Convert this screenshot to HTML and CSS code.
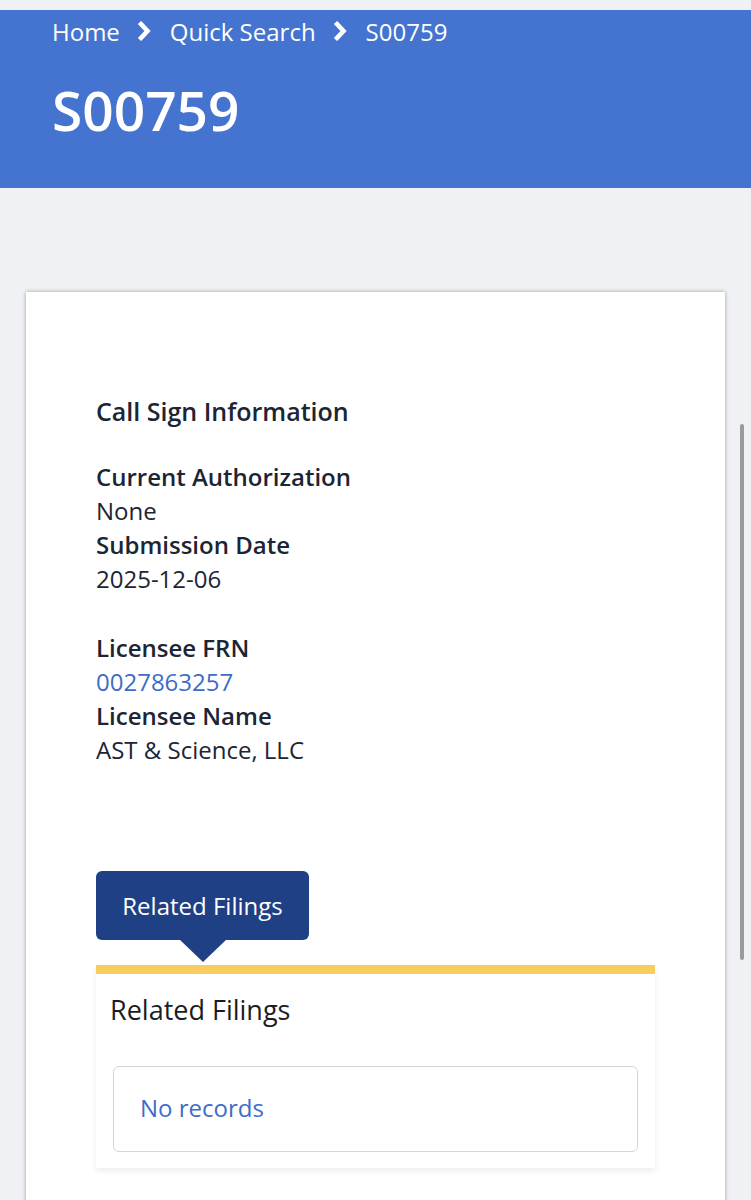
FILE: index.html
```html
<!DOCTYPE html>
<html lang="en">
<head>
    <meta charset="UTF-8">
    <meta name="viewport" content="width=device-width, initial-scale=1.0">
    <title>S00759</title>
    <link rel="stylesheet" href="styles.css">
</head>
<body>
    <header class="page-header">
        <nav class="breadcrumb">
            <a href="#">Home</a>
            <svg class="crumb-sep" viewBox="0 0 14 20" width="14" height="20"><polyline points="2.5,1.5 10.5,10 2.5,18.5" fill="none" stroke="#fff" stroke-width="4.6" stroke-linejoin="miter" stroke-linecap="butt"/></svg>
            <a href="#">Quick Search</a>
            <svg class="crumb-sep" viewBox="0 0 14 20" width="14" height="20"><polyline points="2.5,1.5 10.5,10 2.5,18.5" fill="none" stroke="#fff" stroke-width="4.6" stroke-linejoin="miter" stroke-linecap="butt"/></svg>
            <span>S00759</span>
        </nav>
        <h1 class="page-title">S00759</h1>
    </header>

    <main class="content">
        <section class="card">
            <h2 class="section-title">Call Sign Information</h2>

            <dl class="info-group">
                <dt>Current Authorization</dt>
                <dd>None</dd>
                <dt>Submission Date</dt>
                <dd>2025-12-06</dd>
            </dl>

            <dl class="info-group">
                <dt>Licensee FRN</dt>
                <dd><a href="#">0027863257</a></dd>
                <dt>Licensee Name</dt>
                <dd>AST &amp; Science, LLC</dd>
            </dl>

            <div class="tabs">
                <button class="tab active">Related Filings</button>
            </div>
            <div class="tab-panel">
                <h3 class="panel-title">Related Filings</h3>
                <div class="records-box">
                    <a href="#" class="no-records">No records</a>
                </div>
            </div>
        </section>
    </main>

    <div class="scrollbar"></div>
</body>
</html>
```

FILE: styles.css
```css
body {
    font-family: 'Open Sans', 'Noto Sans', sans-serif;
    background-color: #f0f1f4;
    color: #1c2534;
    margin: 0;
    padding: 0;
}

a {
    color: inherit;
    text-decoration: none;
}

/* Header */
.page-header {
    margin-top: 10px;
    background-color: #4474cf;
    color: #fff;
    padding: 0 52px;
    height: 178px;
}

.breadcrumb {
    display: flex;
    align-items: center;
    font-size: 24px;
    height: 42px;
}

.breadcrumb a,
.breadcrumb span {
    color: #fff;
}

.crumb-sep {
    margin: 0 19px 0 17px;
}

.page-title {
    margin: 0;
    margin-top: 23px;
    font-size: 55px;
    font-weight: 600;
    line-height: 70px;
}

/* Card */
.content {
    padding: 104px 26px 0 26px;
}

.card {
    background: #fff;
    box-shadow: 0 0 4px rgba(0, 0, 0, 0.35);
    padding: 102px 70px 60px 70px;
    width: 699px;
    box-sizing: border-box;
}

.section-title {
    margin: 0 0 32px 0;
    font-size: 25px;
    font-weight: 600;
    line-height: 34px;
}

.info-group {
    margin: 0 0 35px 0;
    font-size: 24px;
    line-height: 34px;
}

.info-group dt {
    font-weight: 600;
}

.info-group dd {
    margin: 0;
}

.info-group dd a {
    color: #3d6dc6;
}

/* Tabs */
.tabs {
    margin-top: 104px;
    display: flex;
}

.tab {
    position: relative;
    background-color: #1f4084;
    color: #fff;
    border: none;
    border-radius: 6px;
    font-family: inherit;
    font-size: 24px;
    height: 69px;
    width: 213px;
    padding: 0;
    cursor: pointer;
}

.tab.active::after {
    content: "";
    position: absolute;
    left: 83px;
    bottom: -22px;
    border-left: 24px solid transparent;
    border-right: 24px solid transparent;
    border-top: 23px solid #1f4084;
}

.tab-panel {
    margin-top: 25px;
    border-top: 9px solid #f8cd60;
    background: #fff;
    box-shadow: 0 3px 6px rgba(0, 0, 0, 0.08);
    padding: 14px 17px 16px 14px;
}

.panel-title {
    margin: 0 0 34px 0;
    font-size: 27px;
    font-weight: 400;
    line-height: 44px;
    color: #1b1d22;
}

.records-box {
    border: 1px solid #d3d5d9;
    border-radius: 6px;
    height: 80px;
    display: flex;
    align-items: center;
    padding: 0 26px 4px 26px;
    margin-left: 3px;
}

.no-records {
    color: #3d6dc6;
    font-size: 24px;
}

.scrollbar {
    position: fixed;
    right: 7px;
    top: 424px;
    width: 4px;
    height: 536px;
    border-radius: 2px;
    background: #9a9a9c;
}
```
